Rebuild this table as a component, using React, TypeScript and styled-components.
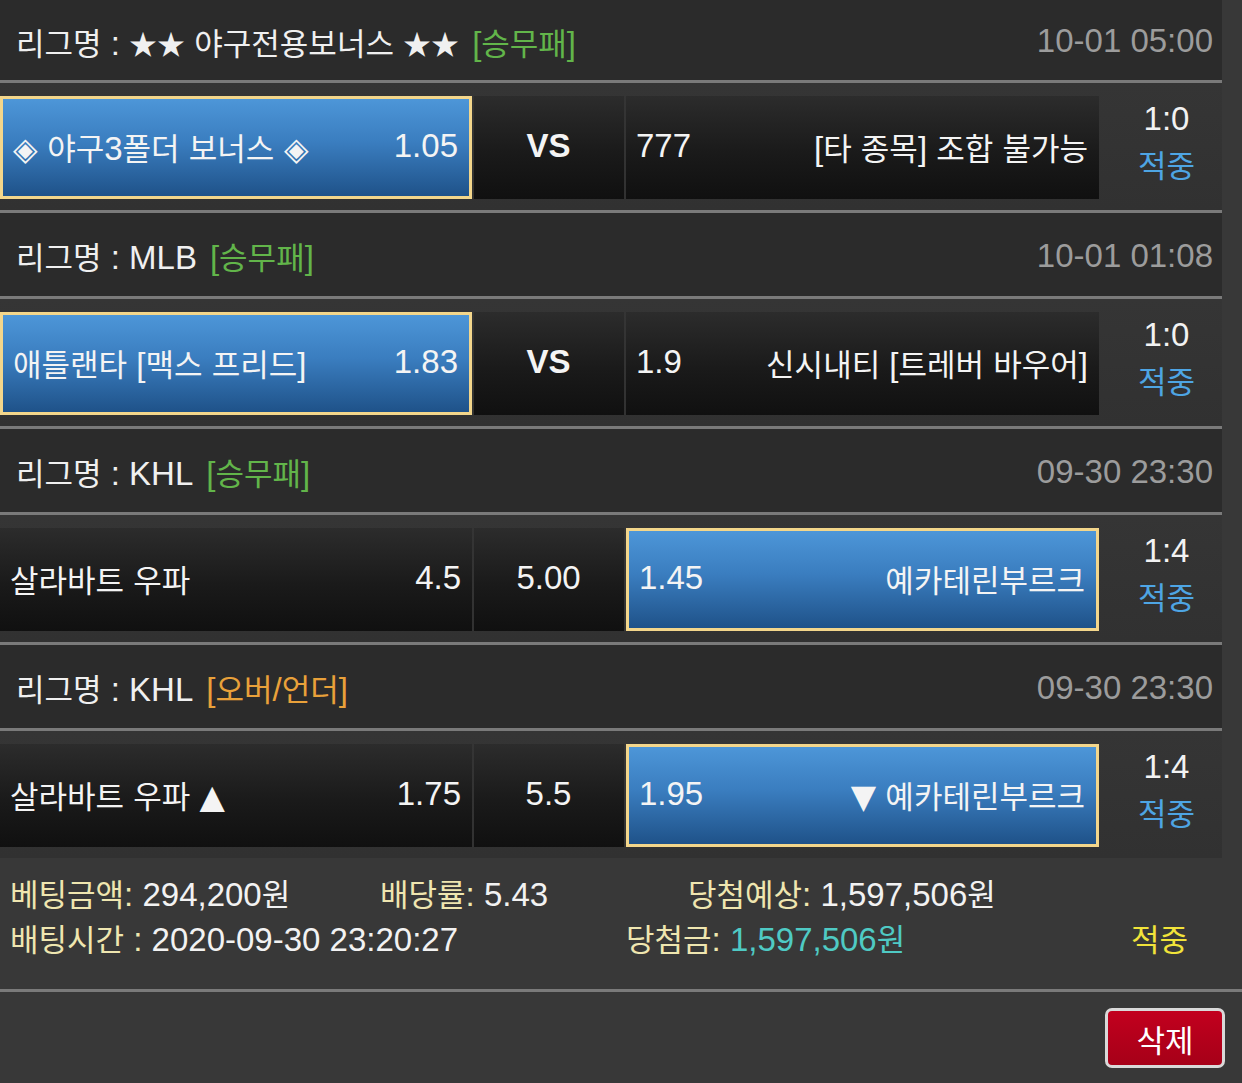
import styled, {createGlobalStyle} from "styled-components";

const GlobalStyle = createGlobalStyle`
  html, body {
    margin: 0;
    padding: 0;
    background: #383838;
  }
  body {
    font-family: "Liberation Sans", "Noto Sans CJK KR", sans-serif;
    color: #f2f2f2;
    font-size: 33px;
  }
`;

const Page = styled.div`
  width: 1242px;
  background: #383838;
`;

const Board = styled.div`
  width: 1222px;
`;

// hangul runs are set a little smaller than the latin digits, as on the device
const Ko = styled.span`
  font-family: "Noto Sans CJK KR", sans-serif;
  font-size: 31px;
`;

const Sym = styled.span<{$glyph: string}>`
  font-family: ${({$glyph}) =>
    $glyph === "▲" || $glyph === "▼" ? `"DejaVu Sans", sans-serif` : `"Noto Sans CJK KR", sans-serif`};
  font-size: ${({$glyph}) => ($glyph === "★" ? "28px" : $glyph === "◈" ? "32px" : "33px")};
`;

const Txt = ({children}: {children: string}) => {
  const parts = children.split(/([\uAC00-\uD7A3]+|[★◈▲▼])/);
  return (
    <>
      {parts.map((p, i) =>
        /[\uAC00-\uD7A3]/.test(p) ? (
          <Ko key={i}>{p}</Ko>
        ) : /[★◈▲▼]/.test(p) ? (
          <Sym key={i} $glyph={p}>
            {p}
          </Sym>
        ) : (
          p
        )
      )}
    </>
  );
};

const Header = styled.div<{$height: number}>`
  height: ${({$height}) => $height}px;
  box-sizing: border-box;
  padding: 2px 9px 0 16px;
  display: flex;
  align-items: center;
  justify-content: space-between;
  background: #2b2b2b;
  white-space: nowrap;
`;

const League = styled.div`
  color: #f0f0f0;
`;

const Tag = styled.span<{$kind: "win" | "ou"}>`
  margin-left: 13px;
  color: ${({$kind}) => ($kind === "win" ? "#62b54a" : "#e9a13a")};
`;

const Time = styled.div`
  color: #9c9c9c;
`;

const Rule = styled.div<{$wide?: boolean}>`
  height: 3px;
  width: ${({$wide}) => ($wide ? "1242px" : "1222px")};
  background: #7a7a7a;
`;

const Row = styled.div`
  height: 127px;
  box-sizing: border-box;
  padding: 13px 0 11px;
  display: grid;
  grid-template-columns: 472px 150px 473px 1fr;
  grid-template-rows: 103px;
  column-gap: 2px;
  background: linear-gradient(#353535, #313131);
`;

const Cell = styled.div<{$picked?: boolean; $center?: boolean}>`
  box-sizing: border-box;
  display: flex;
  align-items: center;
  justify-content: ${({$center}) => ($center ? "center" : "space-between")};
  padding: 0 11px 3px 10px;
  white-space: nowrap;
  color: #f4f4f4;
  background: ${({$picked}) =>
    $picked
      ? "linear-gradient(#4d96d8, #3a7dbf 45%, #1f5289)"
      : "linear-gradient(#2c2c2c, #1a1a1a 55%, #101010)"};
  border: ${({$picked}) => ($picked ? "3px solid #f3d68b" : "none")};
`;

const Vs = styled.span`
  font-weight: 700;
  font-size: 33px;
`;

const Score = styled.div`
  box-sizing: border-box;
  display: flex;
  flex-direction: column;
  align-items: center;
  justify-content: center;
  padding: 0 0 13px 10px;
`;

const ScoreLine = styled.div`
  height: 45px;
  line-height: 45px;
`;

const Result = styled.span<{$tone: "blue" | "yellow"}>`
  color: ${({$tone}) => ($tone === "blue" ? "#4ea5e4" : "#f1e33a")};
`;

const Summary = styled.div`
  height: 131px;
  box-sizing: border-box;
  padding: 12px 0 0 10px;
  display: flex;
  flex-direction: column;
`;

const SummaryLine = styled.div<{$cols: string}>`
  display: grid;
  grid-template-columns: ${({$cols}) => $cols};
  height: 45px;
  line-height: 45px;
  white-space: nowrap;
`;

const Label = styled.span`
  color: #efe6b0;
`;

const Teal = styled.span`
  color: #4fcac4;
`;

const Footer = styled.div`
  display: flex;
  justify-content: flex-end;
  padding: 16px 17px 0 0;
  height: 91px;
  box-sizing: border-box;
`;

const DeleteButton = styled.button`
  width: 120px;
  height: 60px;
  box-sizing: border-box;
  border: 3px solid #d9d9d9;
  border-radius: 7px;
  background: linear-gradient(#c2001e, #a60018);
  color: #fff;
  font-family: "Noto Sans CJK KR", sans-serif;
  font-size: 31px;
  padding: 0;
  cursor: pointer;
`;

type Side = {name: string; odds: string; picked?: boolean};

type Match = {
  league: string;
  tag: "win" | "ou";
  time: string;
  home: Side;
  middle: string;
  away: Side;
  score: string;
};

const matches: Match[] = [
  {
    league: "리그명 : ★★ 야구전용보너스 ★★",
    tag: "win",
    time: "10-01 05:00",
    home: {name: "◈ 야구3폴더 보너스 ◈", odds: "1.05", picked: true},
    middle: "VS",
    away: {name: "[타 종목] 조합 불가능", odds: "777"},
    score: "1:0",
  },
  {
    league: "리그명 : MLB",
    tag: "win",
    time: "10-01 01:08",
    home: {name: "애틀랜타 [맥스 프리드]", odds: "1.83", picked: true},
    middle: "VS",
    away: {name: "신시내티 [트레버 바우어]", odds: "1.9"},
    score: "1:0",
  },
  {
    league: "리그명 : KHL",
    tag: "win",
    time: "09-30 23:30",
    home: {name: "살라바트 우파", odds: "4.5"},
    middle: "5.00",
    away: {name: "예카테린부르크", odds: "1.45", picked: true},
    score: "1:4",
  },
  {
    league: "리그명 : KHL",
    tag: "ou",
    time: "09-30 23:30",
    home: {name: "살라바트 우파 ▲", odds: "1.75"},
    middle: "5.5",
    away: {name: "▼ 예카테린부르크", odds: "1.95", picked: true},
    score: "1:4",
  },
];

const App = () => {
  return (
    <Page>
      <GlobalStyle />
      <Board>
        {matches.map((m, i) => (
          <div key={i}>
            <Header $height={i === 0 ? 80 : 83}>
              <League>
                <Txt>{m.league}</Txt>
                <Tag $kind={m.tag}>
                  <Txt>{m.tag === "win" ? "[승무패]" : "[오버/언더]"}</Txt>
                </Tag>
              </League>
              <Time>{m.time}</Time>
            </Header>
            <Rule />
            <Row>
              <Cell $picked={m.home.picked}>
                <span>
                  <Txt>{m.home.name}</Txt>
                </span>
                <span>{m.home.odds}</span>
              </Cell>
              <Cell $center>
                {m.middle === "VS" ? <Vs>VS</Vs> : <span>{m.middle}</span>}
              </Cell>
              <Cell $picked={m.away.picked}>
                <span>{m.away.odds}</span>
                <span>
                  <Txt>{m.away.name}</Txt>
                </span>
              </Cell>
              <Score>
                <ScoreLine>{m.score}</ScoreLine>
                <ScoreLine>
                  <Result $tone="blue">
                    <Txt>적중</Txt>
                  </Result>
                </ScoreLine>
              </Score>
            </Row>
            {i < matches.length - 1 && <Rule />}
          </div>
        ))}
      </Board>
      <Summary>
        <SummaryLine $cols="370px 308px auto">
          <span>
            <Label>
              <Txt>베팅금액:</Txt>
            </Label>{" "}
            <Txt>294,200원</Txt>
          </span>
          <span>
            <Label>
              <Txt>배당률:</Txt>
            </Label>{" "}
            5.43
          </span>
          <span>
            <Label>
              <Txt>당첨예상:</Txt>
            </Label>{" "}
            <Txt>1,597,506원</Txt>
          </span>
        </SummaryLine>
        <SummaryLine $cols="616px 505px auto">
          <span>
            <Label>
              <Txt>배팅시간 :</Txt>
            </Label>{" "}
            2020-09-30 23:20:27
          </span>
          <span>
            <Label>
              <Txt>당첨금:</Txt>
            </Label>{" "}
            <Teal>
              <Txt>1,597,506원</Txt>
            </Teal>
          </span>
          <Result $tone="yellow">
            <Txt>적중</Txt>
          </Result>
        </SummaryLine>
      </Summary>
      <Rule $wide />
      <Footer>
        <DeleteButton>삭제</DeleteButton>
      </Footer>
    </Page>
  );
};

export default App;
